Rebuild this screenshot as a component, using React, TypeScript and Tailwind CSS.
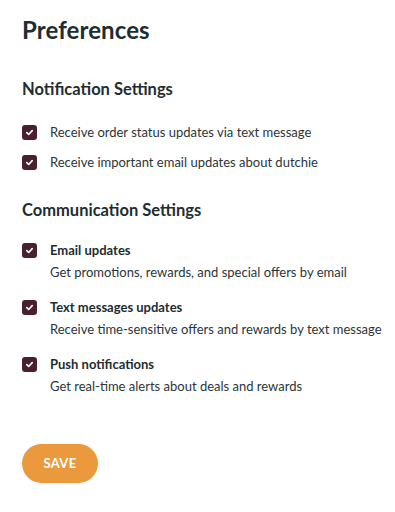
const font = { fontFamily: 'Lato, "Noto Sans", sans-serif' };

const notifications = [
  'Receive order status updates via text message',
  'Receive important email updates about dutchie',
];

const communications = [
  { title: 'Email updates', desc: 'Get promotions, rewards, and special offers by email' },
  { title: 'Text messages updates', desc: 'Receive time-sensitive offers and rewards by text message' },
  { title: 'Push notifications', desc: 'Get real-time alerts about deals and rewards' },
];

function Check() {
  return (
    <span className="flex h-[15px] w-[15px] shrink-0 items-center justify-center rounded-[3px] bg-[#4a2030]">
      <svg width="9" height="9" viewBox="0 0 10 10" fill="none">
        <path d="M2 5.2 L4.1 7.2 L8 2.9" stroke="white" strokeWidth="1.8" strokeLinecap="round" strokeLinejoin="round" />
      </svg>
    </span>
  );
}

export default function App() {
  return (
    <div className="min-h-screen bg-white px-[22px] pt-[14px] text-[#1e2d31]" style={font}>
      <h1 className="text-[24px] font-bold leading-[32px] tracking-[0.1px]">Preferences</h1>

      <h2 className="mt-[32px] text-[16.5px] font-bold leading-[22px]">Notification Settings</h2>
      <div className="mt-[25px] flex flex-col gap-[15px]">
        {notifications.map((n) => (
          <label key={n} className="flex items-center gap-[13px] text-[13px] leading-[15px] text-[#2b3538]">
            <Check />
            {n}
          </label>
        ))}
      </div>

      <h2 className="mt-[29px] text-[16.5px] font-bold leading-[22px]">Communication Settings</h2>
      <div className="mt-[22px] flex flex-col gap-[20px]">
        {communications.map((c) => (
          <div key={c.title} className="flex flex-col">
            <label className="flex items-center gap-[13px] text-[13px] font-bold leading-[15px]">
              <Check />
              {c.title}
            </label>
            <p className="mt-[6px] whitespace-nowrap pl-[28px] text-[13px] leading-[16px] text-[#2b3538]">{c.desc}</p>
          </div>
        ))}
      </div>

      <button className="mt-[50px] h-[39px] w-[76px] rounded-full bg-[#ea9a3d] text-[13px] font-bold tracking-[0.3px] text-white">
        SAVE
      </button>
    </div>
  );
}
